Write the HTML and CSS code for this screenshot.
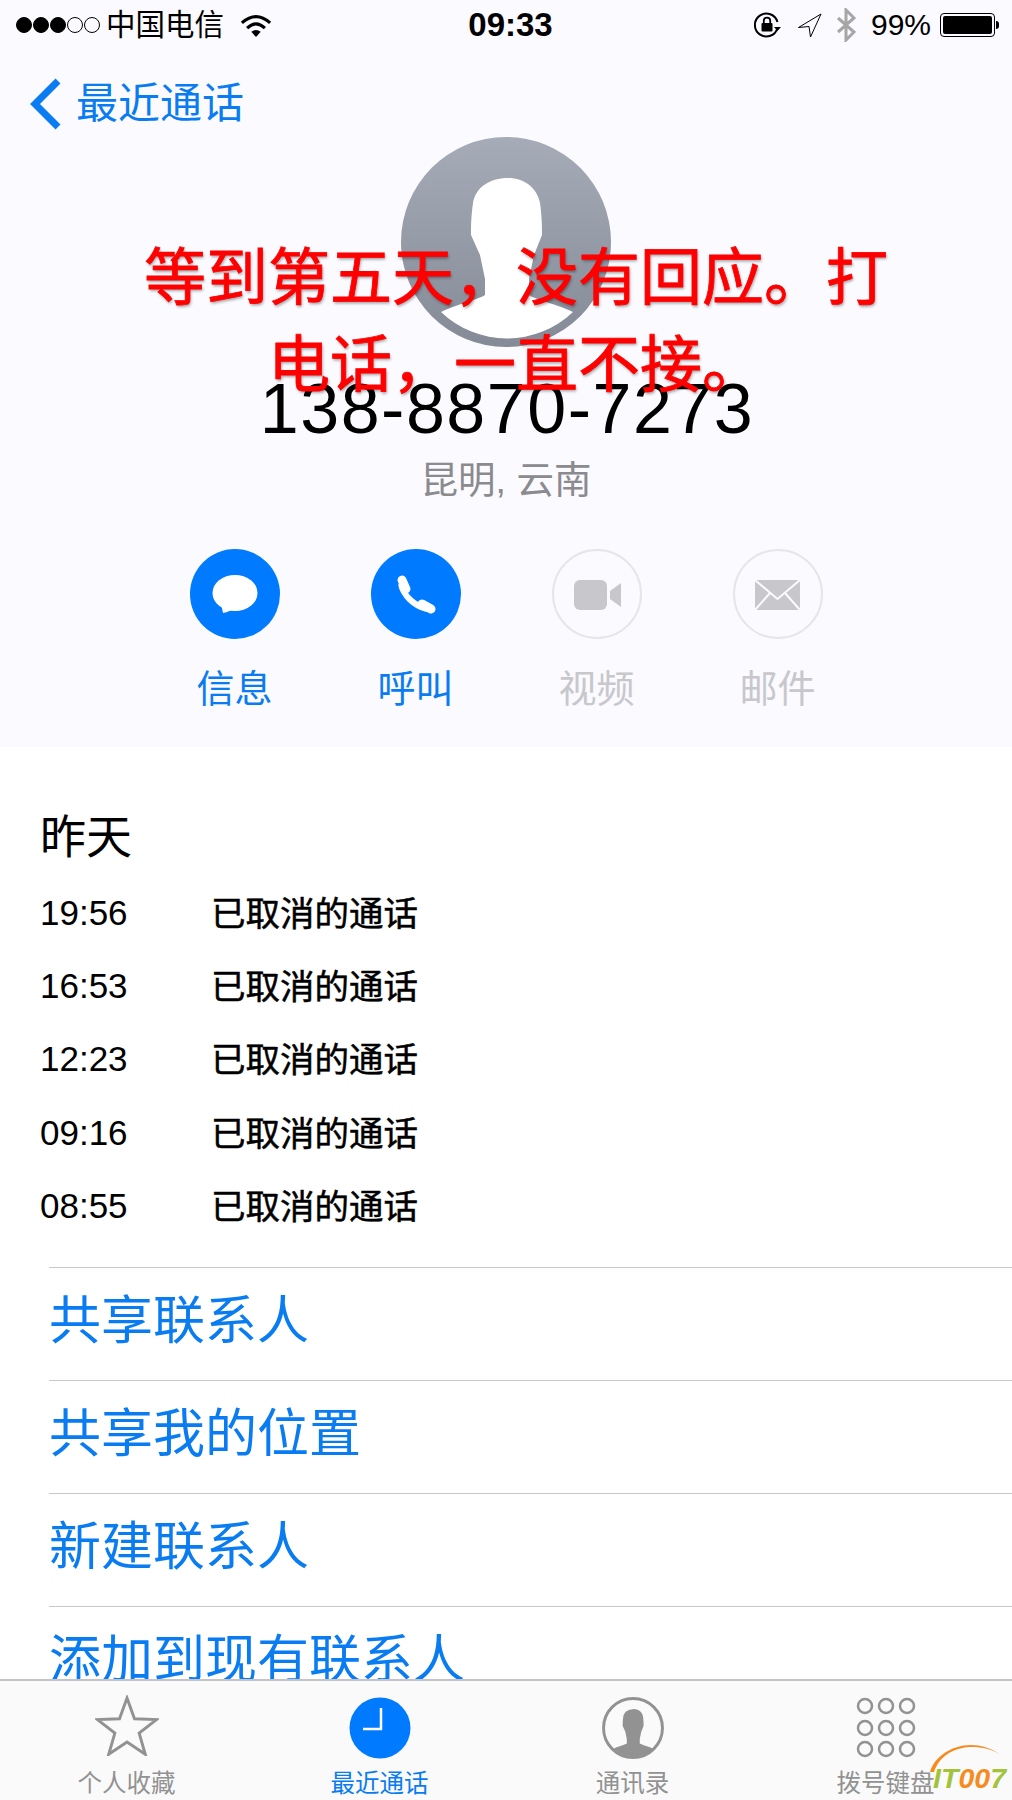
FILE: index.html
```html
<!DOCTYPE html>
<html lang="zh-CN">
<head>
  <meta charset="UTF-8" />
  <meta name="viewport" content="width=device-width, initial-scale=1.0"/>
  <title>最近通话</title>
  <link rel="stylesheet" href="styles.css">
</head>
<body>
  <div class="screen">
    <div class="content">
      <section class="profile">
        <div class="status-bar">
          <div class="status-left">
            <span class="signal">
              <i class="dot on"></i><i class="dot on"></i><i class="dot on"></i><i class="dot"></i><i class="dot"></i>
            </span>
            <span class="carrier">中国电信</span>
            <svg class="wifi" width="32" height="23" viewBox="0 0 30 22">
              <path d="M1.5 8.5Q15 -3.5 28.5 8.5" fill="none" stroke="#000" stroke-width="3"/>
              <path d="M6.5 13.5Q15 5.5 23.5 13.5" fill="none" stroke="#000" stroke-width="3"/>
              <path d="M10.5 17Q15 13.5 19.5 17L15 22Z" fill="#000"/>
            </svg>
          </div>
          <div class="clock">09:33</div>
          <div class="status-right">
            <svg width="28" height="26" viewBox="0 0 28 26">
              <path d="M23.5 16A11.5 11.5 0 1 1 23.5 10" fill="none" stroke="#000" stroke-width="2"/>
              <path d="M20 15h7l-3.500 4z" fill="#000"/>
              <rect x="7.500" y="11" width="11" height="8.500" rx="1" fill="#000"/>
              <path d="M9.800 11V8.800a3.200 3.200 0 0 1 6.400 0V11" fill="none" stroke="#000" stroke-width="1.800"/>
            </svg>
            <svg class="arrow" width="25" height="25" viewBox="0 0 25 25">
              <path d="M1.500 14.500L24 1L13.500 24L12 13.500Z" fill="none" stroke="#000" stroke-width="1"/>
            </svg>
            <svg class="bluetooth" width="20" height="34" viewBox="0 0 20 34">
              <path d="M2 10L18 24L10 32V2L18 10L2 24" fill="none" stroke="#a6a6a6" stroke-width="3"/>
            </svg>
            <span class="percent">99%</span>
            <span class="battery"><span class="battery-fill"></span></span>
            <span class="battery-nub"></span>
          </div>
        </div>

        <div class="nav">
          <svg width="33" height="52" viewBox="0 0 33 52">
            <path d="M29 3L6 26L29 49" fill="none" stroke="#0a7cf2" stroke-width="7"/>
          </svg>
          <span class="nav-title">最近通话</span>
        </div>

        <svg class="avatar" width="210" height="210" viewBox="0 0 210 210">
          <defs>
            <linearGradient id="avatarFill" x1="0" y1="0" x2="0" y2="1">
              <stop offset="0" stop-color="#a5abb7"/>
              <stop offset="1" stop-color="#858a97"/>
            </linearGradient>
          </defs>
          <circle cx="105" cy="105" r="105" fill="url(#avatarFill)"/>
          <path d="M105 41C122 40 136 50 139 66C141 80 141 90 141 98L133 118L128 142L128 158C135 163 158 168 172 175A95.500 95.500 0 0 1 40 175C54 168 76 163 84 158L84 142L79 118L70 98C70 90 70 80 72 66C75 50 88 42 105 41Z" fill="#fff"/>
        </svg>

        <div class="number">138-8870-7273</div>
        <div class="location">昆明, 云南</div>

        <div class="actions">
          <div class="action">
            <svg width="90" height="90" viewBox="0 0 90 90">
              <circle cx="45" cy="45" r="45" fill="#007aff"/>
              <ellipse cx="45" cy="44" rx="22.500" ry="18" fill="#fff"/>
              <path d="M31 54L33 64Q40 63 45 58Z" fill="#fff"/>
            </svg>
            <span class="action-label">信息</span>
          </div>
          <div class="action">
            <svg width="90" height="90" viewBox="0 0 90 90">
              <circle cx="45" cy="45" r="45" fill="#007aff"/>
              <path d="M30 35C32 46 43 57 56 60" fill="none" stroke="#fff" stroke-width="6"/>
              <path d="M31 31L35 40" fill="none" stroke="#fff" stroke-width="9" stroke-linecap="round"/>
              <path d="M51 55L60 60" fill="none" stroke="#fff" stroke-width="9" stroke-linecap="round"/>
            </svg>
            <span class="action-label">呼叫</span>
          </div>
          <div class="action off">
            <svg width="90" height="90" viewBox="0 0 90 90">
              <circle cx="45" cy="45" r="44" fill="none" stroke="#e6e6ea" stroke-width="2"/>
              <rect x="22" y="31" width="33" height="30" rx="6" fill="#c7c7cc"/>
              <path d="M58 42L69 34V58L58 50Z" fill="#c7c7cc"/>
            </svg>
            <span class="action-label">视频</span>
          </div>
          <div class="action off">
            <svg width="90" height="90" viewBox="0 0 90 90">
              <circle cx="45" cy="45" r="44" fill="none" stroke="#e6e6ea" stroke-width="2"/>
              <rect x="22" y="31" width="45" height="30" fill="#c7c7cc"/>
              <path d="M22 31L44.500 50L67 31M22 61L37 44M67 61L52 44" fill="none" stroke="#fafaff" stroke-width="2"/>
            </svg>
            <span class="action-label">邮件</span>
          </div>
        </div>

        <div class="caption">等到第五天，没有回应。打电话，一直不接。</div>
      </section>

      <section class="calls">
        <h2 class="calls-day">昨天</h2>
        <div class="call"><span class="call-time">19:56</span><span class="call-type">已取消的通话</span></div>
        <div class="call"><span class="call-time">16:53</span><span class="call-type">已取消的通话</span></div>
        <div class="call"><span class="call-time">12:23</span><span class="call-type">已取消的通话</span></div>
        <div class="call"><span class="call-time">09:16</span><span class="call-type">已取消的通话</span></div>
        <div class="call"><span class="call-time">08:55</span><span class="call-type">已取消的通话</span></div>
      </section>

      <section class="links">
        <div class="link">共享联系人</div>
        <div class="link">共享我的位置</div>
        <div class="link">新建联系人</div>
        <div class="link">添加到现有联系人</div>
      </section>
    </div>

    <nav class="tabbar">
      <div class="tab">
        <svg class="tab-star" width="64" height="61" viewBox="0 0 70 66">
          <path d="M35 3L43.200 25.700L67.300 26.500L48.300 41.300L55 64.500L35 51L15 64.500L21.700 41.300L2.700 26.500L26.800 25.700Z" fill="none" stroke="#929292" stroke-width="3.200"/>
        </svg>
        <span class="tab-label">个人收藏</span>
      </div>
      <div class="tab active">
        <svg width="62" height="66" viewBox="0 0 62 66">
          <circle cx="31" cy="33" r="30.500" fill="#007aff"/>
          <path d="M32 13V34H14" fill="none" stroke="#fff" stroke-width="2.500"/>
        </svg>
        <span class="tab-label">最近通话</span>
      </div>
      <div class="tab">
        <svg width="62" height="66" viewBox="0 0 210 224">
          <circle cx="105" cy="112" r="100" fill="#fafafa" stroke="#929292" stroke-width="10"/>
          <path transform="translate(0 7)" d="M105 41C122 40 136 50 139 66C141 80 141 90 141 98L133 118L128 142L128 158C135 163 158 168 172 175A95.500 95.500 0 0 1 40 175C54 168 76 163 84 158L84 142L79 118L70 98C70 90 70 80 72 66C75 50 88 42 105 41Z" fill="#929292"/>
        </svg>
        <span class="tab-label">通讯录</span>
      </div>
      <div class="tab">
        <svg width="62" height="66" viewBox="0 0 62 66">
          <g fill="none" stroke="#929292" stroke-width="2.500">
            <circle cx="10" cy="11" r="7"/><circle cx="31" cy="11" r="7"/><circle cx="52" cy="11" r="7"/>
            <circle cx="10" cy="33" r="7"/><circle cx="31" cy="33" r="7"/><circle cx="52" cy="33" r="7"/>
            <circle cx="10" cy="54" r="7"/><circle cx="31" cy="54" r="7"/><circle cx="52" cy="54" r="7"/>
          </g>
        </svg>
        <span class="tab-label">拨号键盘</span>
      </div>
    </nav>

    <div class="stamp">
      <svg class="stamp-arc" width="80" height="34" viewBox="0 0 80 34">
        <path d="M2 32C8 10 42 -6 72 14C50 2 16 4 6 32Z" fill="#f68b1f"/>
      </svg>
      <span class="stamp-text"><span class="green">IT</span><span class="orange">00</span><span class="green">7</span></span>
    </div>
  </div>
</body>
</html>
```

FILE: styles.css
```css
:root {
  --blue: #0a7cf2;
  --grey: #929292;
  --disabled: #c7c7cc;
  --header-bg: #fafaff;
}

* {
  box-sizing: border-box;
}

body {
  margin: 0;
  background: #fff;
  color: #000;
  font-family: "Liberation Sans", "Noto Sans CJK SC", sans-serif;
}

.screen {
  position: relative;
  display: flex;
  flex-direction: column;
  width: 1012px;
  height: 1800px;
  overflow: hidden;
}

.content {
  flex: 1;
  min-height: 0;
  overflow: hidden;
}

.profile {
  position: relative;
  display: flex;
  flex-direction: column;
  align-items: center;
  height: 747px;
  background: var(--header-bg);
}

.status-bar {
  display: grid;
  grid-template-columns: 1fr auto 1fr;
  align-items: center;
  width: 100%;
  height: 50px;
  padding: 0 13px 0 16px;
}

.status-left,
.status-right {
  display: flex;
  align-items: center;
}

.status-right {
  justify-content: flex-end;
}

.signal {
  display: flex;
  gap: 1px;
}

.dot {
  width: 16px;
  height: 16px;
  border: 1px solid #000;
  border-radius: 50%;
}

.dot.on {
  background: #000;
}

.carrier {
  margin-left: 6px;
  font-size: 29.500px;
  line-height: 36px;
}

.wifi {
  margin-left: 16px;
}

.clock {
  padding-left: 6px;
  font-size: 33px;
  font-weight: 700;
}

.arrow {
  margin-left: 15px;
}

.bluetooth {
  margin-left: 14px;
}

.percent {
  margin-left: 15px;
  font-size: 30px;
}

.battery {
  display: block;
  width: 55px;
  height: 24px;
  margin-left: 9px;
  padding: 2px;
  border: 1px solid #000;
  border-radius: 4px;
}

.battery-fill {
  display: block;
  height: 100%;
  background: #000;
  border-radius: 2px;
}

.battery-nub {
  width: 3px;
  height: 8px;
  margin-left: 1px;
  background: #000;
  border-radius: 0 3px 3px 0;
}

.nav {
  display: flex;
  align-items: center;
  gap: 14px;
  width: 100%;
  height: 87px;
  padding: 20px 0 0 29px;
}

.nav-title {
  font-size: 42px;
  line-height: 50px;
  color: var(--blue);
}

.avatar {
  flex: none;
}

.number {
  margin-top: 22px;
  padding-left: 2px;
  font-size: 70px;
  line-height: 80px;
  letter-spacing: 1.500px;
}

.location {
  margin-top: 6px;
  font-size: 37.500px;
  line-height: 50px;
  color: #8a8a8f;
}

.actions {
  display: grid;
  grid-template-columns: repeat(4, 181px);
  margin-top: 44px;
}

.action {
  display: flex;
  flex-direction: column;
  align-items: center;
  gap: 28px;
}

.action-label {
  font-size: 38px;
  line-height: 44px;
  color: var(--blue);
}

.action.off .action-label {
  color: var(--disabled);
}

/* red note typed over the screenshot */
.caption {
  position: absolute;
  top: 235px;
  left: 136px;
  width: 760px;
  font-size: 62px;
  line-height: 87px;
  text-align: center;
  color: #f00;
  -webkit-text-stroke: 0.8px #f00;
  text-shadow: 1px 2px 3px rgba(0, 0, 0, 0.35);
}

.calls {
  padding: 60px 0 0 40px;
}

.calls-day {
  margin: 0 0 9px;
  font-size: 46px;
  font-weight: 400;
  line-height: 60px;
}

.call {
  display: grid;
  grid-template-columns: 171px auto;
  align-items: center;
  height: 73.300px;
}

.call-time {
  font-size: 35px;
}

.call-type {
  padding-bottom: 4px;
  font-size: 34.500px;
  -webkit-text-stroke: 0.5px #000;
}

.links {
  margin: 24.500px 0 0 49px;
}

.link {
  height: 113px;
  padding-bottom: 6px;
  border-top: 1px solid #c8c7cc;
  font-size: 52px;
  line-height: 106px;
  color: var(--blue);
}

.tabbar {
  display: grid;
  flex: none;
  grid-template-columns: repeat(4, 253px);
  height: 121px;
  padding-top: 14px;
  border-top: 2px solid #c4c4c8;
  background: #fafafa;
}

.tab {
  display: flex;
  flex-direction: column;
  align-items: center;
}

.tab-star {
  margin-bottom: 5px;
}

.tab-label {
  margin-top: 8px;
  font-size: 24.500px;
  line-height: 30px;
  color: var(--grey);
}

.tab.active .tab-label {
  color: var(--blue);
}

/* site watermark in the corner */
.stamp {
  position: absolute;
  right: 4px;
  bottom: 6px;
  width: 80px;
  height: 54px;
}

.stamp-arc {
  position: absolute;
  top: 0;
  left: 0;
}

.stamp-text {
  position: absolute;
  right: 2px;
  bottom: 0;
  font-size: 28.500px;
  font-weight: 700;
  font-style: italic;
  line-height: 32px;
}

.green {
  color: #a4c33a;
}

.orange {
  color: #f68b1f;
}
```
